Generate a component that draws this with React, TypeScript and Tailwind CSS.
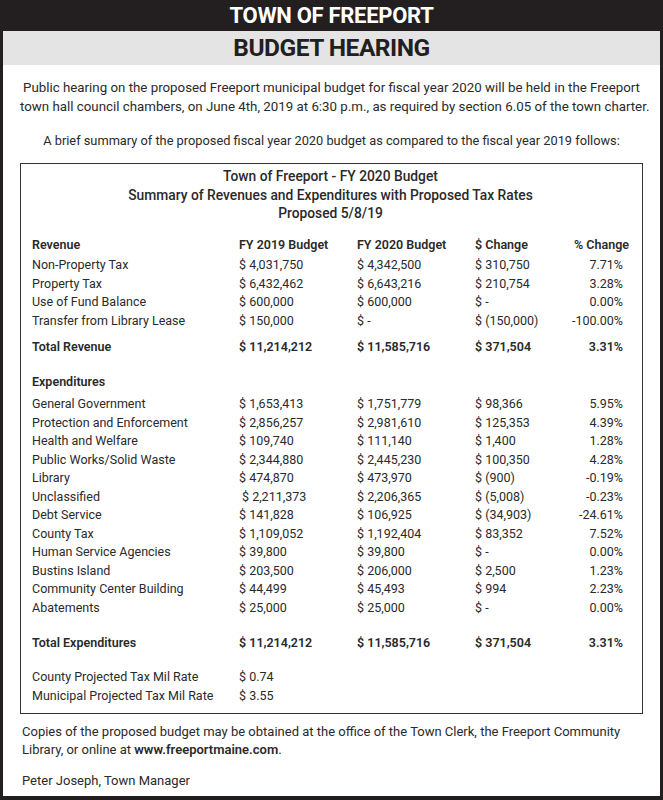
const revenue = [
  ["Non-Property Tax", "$ 4,031,750", "$ 4,342,500", "$ 310,750", "7.71%"],
  ["Property Tax", "$ 6,432,462", "$ 6,643,216", "$ 210,754", "3.28%"],
  ["Use of Fund Balance", "$ 600,000", "$ 600,000", "$ -", "0.00%"],
  ["Transfer from Library Lease", "$ 150,000", "$ -", "$ (150,000)", "-100.00%"],
];

const expenditures = [
  ["General Government", "$ 1,653,413", "$ 1,751,779", "$ 98,366", "5.95%"],
  ["Protection and Enforcement", "$ 2,856,257", "$ 2,981,610", "$ 125,353", "4.39%"],
  ["Health and Welfare", "$ 109,740", "$ 111,140", "$ 1,400", "1.28%"],
  ["Public Works/Solid Waste", "$ 2,344,880", "$ 2,445,230", "$ 100,350", "4.28%"],
  ["Library", "$ 474,870", "$ 473,970", "$ (900)", "-0.19%"],
  ["Unclassified", " $ 2,211,373", "$ 2,206,365", "$ (5,008)", "-0.23%"],
  ["Debt Service", "$ 141,828", "$ 106,925", "$ (34,903)", "-24.61%"],
  ["County Tax", "$ 1,109,052", "$ 1,192,404", "$ 83,352", "7.52%"],
  ["Human Service Agencies", "$ 39,800", "$ 39,800", "$ -", "0.00%"],
  ["Bustins Island", "$ 203,500", "$ 206,000", "$ 2,500", "1.23%"],
  ["Community Center Building", "$ 44,499", "$ 45,493", "$ 994", "2.23%"],
  ["Abatements", "$ 25,000", "$ 25,000", "$ -", "0.00%"],
];

function Row({ cells, bold = false }: { cells: string[]; bold?: boolean }) {
  return (
    <div
      className={`grid grid-cols-[207px_118px_118px_1fr_80px] leading-[18.5px] whitespace-nowrap ${
        bold ? "font-semibold" : ""
      }`}
    >
      <div>{cells[0]}</div>
      <div className={cells[1].startsWith(" ") ? "pl-[3px]" : ""}>{cells[1].trim()}</div>
      <div>{cells[2]}</div>
      <div>{cells[3]}</div>
      <div className="text-right pr-[6px]">{cells[4]}</div>
    </div>
  );
}

export default function App() {
  return (
    <div
      className="w-[663px] h-[800px] overflow-hidden bg-white text-[#2a2a2a] border-x-[3px] border-b-[4px] border-[#231f20] flex flex-col"
      style={{ fontFamily: "Roboto, 'Liberation Sans', sans-serif" }}
    >
      {/* Header bands */}
      <div className="h-[31px] shrink-0 bg-[#231f20] text-white text-[22px] font-bold flex items-center justify-center tracking-[-0.3px]">
        TOWN OF FREEPORT
      </div>
      <div className="h-[34px] shrink-0 bg-[#e4e4e4] text-[#231f20] text-[24.5px] font-bold flex items-center justify-center tracking-[-0.5px]">
        BUDGET HEARING
      </div>

      <div className="px-[17px] whitespace-nowrap">
        <p className="text-center text-[13.3px] leading-[19px] mt-[13px]">
          Public hearing on the proposed Freeport municipal budget for fiscal year 2020 will be held in the Freeport
          <br />
          town hall council chambers, on June 4th, 2019 at 6:30 p.m., as required by section 6.05 of the town charter.
        </p>
        <p className="text-center text-[12.8px] leading-[19px] mt-[15px]">
          A brief summary of the proposed fiscal year 2020 budget as compared to the fiscal year 2019 follows:
        </p>

        {/* Summary table */}
        <div className="mt-[13px] border-[1.5px] border-[#333] pl-[11px] pr-[13px] pt-[3px] pb-[8px] text-[12.5px]">
          <div className="text-center text-[13.8px] font-medium leading-[18.5px]">
            <div>Town of Freeport - FY 2020 Budget</div>
            <div>Summary of Revenues and Expenditures with Proposed Tax Rates</div>
            <div>Proposed 5/8/19</div>
          </div>

          <div className="mt-[13.5px] mb-[1.5px] grid grid-cols-[207px_118px_118px_1fr_80px] leading-[18.5px] font-semibold">
            <div>Revenue</div>
            <div>FY 2019 Budget</div>
            <div>FY 2020 Budget</div>
            <div>$ Change</div>
            <div className="text-right">% Change</div>
          </div>
          {revenue.map((r) => (
            <Row key={r[0]} cells={r} />
          ))}
          <div className="mt-[8px]">
            <Row cells={["Total Revenue", "$ 11,214,212", "$ 11,585,716", "$ 371,504", "3.31%"]} bold />
          </div>

          <div className="mt-[16.5px] mb-[3.5px] font-semibold leading-[18.5px]">Expenditures</div>
          {expenditures.map((r) => (
            <Row key={r[0]} cells={r} />
          ))}
          <div className="mt-[17px]">
            <Row cells={["Total Expenditures", "$ 11,214,212", "$ 11,585,716", "$ 371,504", "3.31%"]} bold />
          </div>

          <div className="mt-[15.5px]">
            <Row cells={["County Projected Tax Mil Rate", "$ 0.74", "", "", ""]} />
            <Row cells={["Municipal Projected Tax Mil Rate", "$ 3.55", "", "", ""]} />
          </div>
        </div>

        <p className="text-[13px] leading-[18px] mt-[9px] pl-[2px]">
          Copies of the proposed budget may be obtained at the office of the Town Clerk, the Freeport Community
          <br />
          Library, or online at <span className="font-semibold">www.freeportmaine.com</span>.
        </p>
        <p className="text-[13px] leading-[18px] mt-[13px] pl-[2px]">Peter Joseph, Town Manager</p>
      </div>
    </div>
  );
}
